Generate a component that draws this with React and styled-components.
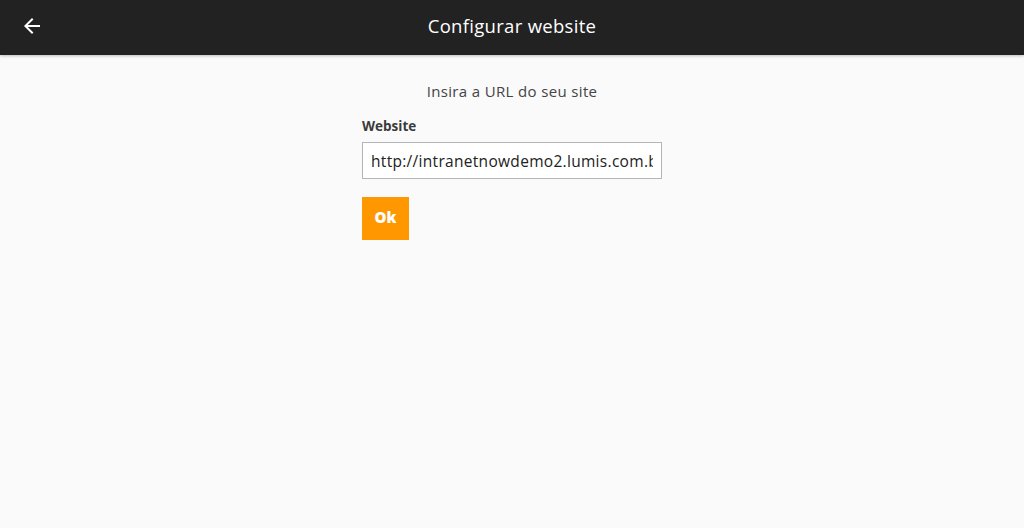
import React from "react";
import styled, { createGlobalStyle } from "styled-components";

const Global = createGlobalStyle`
  html, body {
    margin: 0;
    padding: 0;
    background: #fafafa;
    font-family: "Open Sans", "Lato", sans-serif;
  }
`;

const Page = styled.div`
  min-height: 528px;
  background: #fafafa;
`;

const Header = styled.header`
  height: 55px;
  box-sizing: border-box;
  padding-bottom: 4px;
  background: #222222;
  color: #fff;
  display: flex;
  align-items: center;
  box-shadow: 0 1px 3px rgba(0, 0, 0, 0.25);
`;

const BackButton = styled.button`
  border: 0;
  background: none;
  padding: 0;
  margin-left: 20px;
  width: 24px;
  height: 24px;
  display: flex;
  color: #fff;
  cursor: pointer;
`;

const Title = styled.h1`
  flex: 1;
  margin: 0 64px 0 20px;
  text-align: center;
  font-size: 18.5px;
  font-weight: 400;
  letter-spacing: 0.3px;
  line-height: 24px;
`;

const Content = styled.main`
  width: 300px;
  margin: 0 auto;
  padding-top: 26px;
  display: flex;
  flex-direction: column;
`;

const Hint = styled.p`
  margin: 0;
  text-align: center;
  font-size: 15px;
  letter-spacing: 0.35px;
  color: #444;
  line-height: 20px;
`;

const Label = styled.label`
  margin-top: 16px;
  font-size: 13.5px;
  font-weight: 700;
  color: #3a3a3a;
  line-height: 18px;
`;

const Input = styled.input`
  margin-top: 7px;
  height: 37px;
  box-sizing: border-box;
  border: 1px solid #b5b5b5;
  background: #fff;
  padding: 0 8px;
  font-family: "Open Sans", "Lato", sans-serif;
  font-size: 15.5px;
  letter-spacing: 0.3px;
  color: #222;
  outline: none;
`;

const OkButton = styled.button`
  margin-top: 18px;
  align-self: flex-start;
  width: 47px;
  height: 43px;
  border: 0;
  background: #ff9800;
  color: #fff;
  font-family: "Open Sans", "Lato", sans-serif;
  font-weight: 800;
  font-size: 15px;
  padding: 0 0 4px;
  cursor: pointer;
`;

export default function App() {
  return (
    <>
      <Global />
      <Page>
        <Header>
          <BackButton aria-label="Voltar">
            <svg width="24" height="24" viewBox="0 0 24 24" fill="currentColor">
              <path d="M20 11H7.83l5.59-5.59L12 4l-8 8 8 8 1.41-1.41L7.83 13H20v-2z" />
            </svg>
          </BackButton>
          <Title>Configurar website</Title>
        </Header>
        <Content>
          <Hint>Insira a URL do seu site</Hint>
          <Label htmlFor="site">Website</Label>
          <Input id="site" defaultValue="http://intranetnowdemo2.lumis.com.br" />
          <OkButton>Ok</OkButton>
        </Content>
      </Page>
    </>
  );
}
